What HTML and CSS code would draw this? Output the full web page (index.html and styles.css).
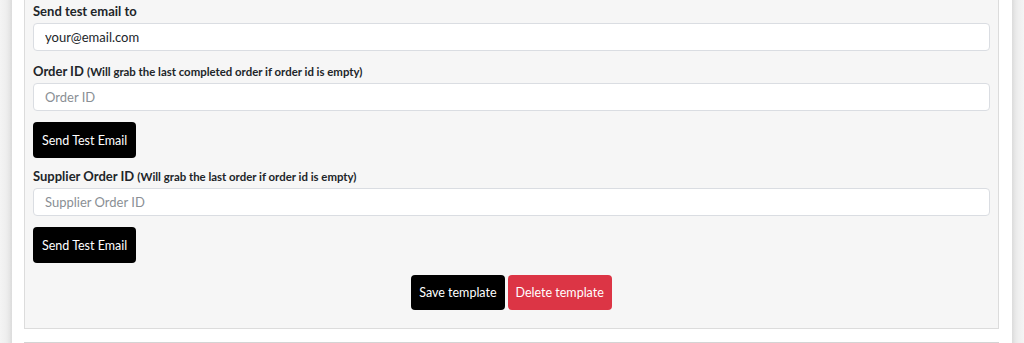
FILE: index.html
```html
<!DOCTYPE html>
<html>
<head>
<meta charset="utf-8">
<link rel="stylesheet" href="styles.css">
</head>
<body>
<div class="card">
  <div class="panel">
    <div class="group">
      <label class="lbl">Send test email to</label>
      <input class="field" type="text" value="your@email.com">
    </div>
    <div class="group">
      <label class="lbl">Order ID <small>(Will grab the last completed order if order id is empty)</small></label>
      <input class="field" type="text" placeholder="Order ID">
    </div>
    <button class="btn btn-dark">Send Test Email</button>
    <div class="group group-after-btn">
      <label class="lbl">Supplier Order ID <small>(Will grab the last order if order id is empty)</small></label>
      <input class="field" type="text" placeholder="Supplier Order ID">
    </div>
    <button class="btn btn-dark">Send Test Email</button>
    <div class="actions">
      <button class="btn btn-dark btn-action">Save template</button>
      <button class="btn btn-red btn-action">Delete template</button>
    </div>
  </div>
  <div class="panel next"></div>
</div>
</body>
</html>
```

FILE: styles.css
```css
html, body {
  margin: 0;
  padding: 0;
  height: 100%;
  overflow: hidden;
}
body {
  background: linear-gradient(to right, #f4f4f4 0, #e9e9e9 12px, transparent 12px, transparent 1012px, #e9e9e9 1012px, #f4f4f4 1024px);
  font-family: "Lato", "Open Sans", sans-serif;
  color: #212529;
}
.card {
  margin: 0 12px;
  background: #fff;
  min-height: 400px;
  padding: 0 13px 0 12px;
  box-sizing: border-box;
  box-shadow: 0 0 6px rgba(0,0,0,0.12);
}
.panel {
  background: #f6f6f6;
  border: 1px solid #dcdcdc;
  margin-top: -20px;
  padding: 21px 8px 18px 8px;
}
.panel.next {
  margin-top: 13px;
  height: 40px;
  background: #fff;
  border-color: #d4d4d4;
}
.group {
  margin-bottom: 11px;
}
.group-after-btn {
  margin-top: 9px;
}
.lbl {
  display: block;
  font-size: 13px;
  font-weight: 700;
  line-height: 18px;
  height: 18px;
  margin-bottom: 3px;
  color: #212529;
}
.lbl small {
  font-size: 11.4px;
  font-weight: 700;
  line-height: 1;
}
.field {
  display: block;
  width: 100%;
  box-sizing: border-box;
  height: 28px;
  border: 1px solid #dadde2;
  border-radius: 4px;
  background: #fff;
  padding: 0 11px;
  font-family: inherit;
  font-size: 13px;
  color: #212529;
  outline: none;
}
.field::placeholder {
  color: #8a8f95;
}
.btn {
  display: block;
  height: 36px;
  padding: 0 9px;
  border: none;
  border-radius: 4px;
  font-family: inherit;
  font-size: 12.5px;
  color: #fff;
  cursor: pointer;
}
.btn-action {
  height: 35px;
  padding: 0 8px;
  font-size: 12.5px;
}
.btn-dark {
  background: #000;
}
.btn-red {
  background: #dc3545;
}
.actions {
  display: flex;
  justify-content: center;
  gap: 3px;
  margin-top: 12px;
}
```
